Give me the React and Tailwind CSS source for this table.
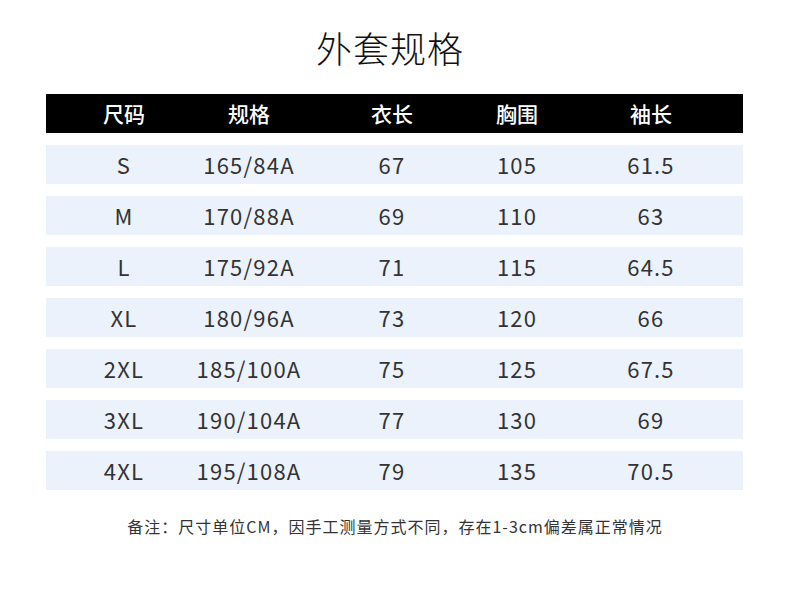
export default function App() {
  const rows = [
    ["S", "165/84A", "67", "105", "61.5"],
    ["M", "170/88A", "69", "110", "63"],
    ["L", "175/92A", "71", "115", "64.5"],
    ["XL", "180/96A", "73", "120", "66"],
    ["2XL", "185/100A", "75", "125", "67.5"],
    ["3XL", "190/104A", "77", "130", "69"],
    ["4XL", "195/108A", "79", "135", "70.5"],
  ];
  const heads = ["尺码", "规格", "衣长", "胸围", "袖长"];
  const grid = "grid grid-cols-[156px_94px_192px_58px_210px]";
  const font = { fontFamily: '"Noto Sans CJK SC", "Noto Sans", sans-serif' };
  return (
    <div className="w-[790px] h-[608px] bg-white overflow-hidden" style={font}>
      <div className="pt-[27px] pr-[10px] text-center text-[36px] leading-[40px] tracking-[1px] font-light text-[#111]">外套规格</div>
      <div className="mt-[27px] ml-[46px] w-[697px]">
        <div className={`${grid} h-[39px] bg-black text-white text-[21px] font-medium items-center`}>
          {heads.map((h) => (
            <div key={h} className="flex justify-center whitespace-nowrap">{h}</div>
          ))}
        </div>
        {rows.map((r) => (
          <div key={r[0]} className={`${grid} mt-[12px] h-[39px] bg-[#ebf2fb] text-[#333] text-[22px] items-center tracking-[1.2px]`}>
            {r.map((c, i) => (
              <div key={i} className="flex justify-center whitespace-nowrap">{c}</div>
            ))}
          </div>
        ))}
      </div>
      <div className="mt-[26px] text-center text-[16px] leading-[20px] tracking-[1px] text-[#333]">
        备注：尺寸单位CM，因手工测量方式不同，存在1-3cm偏差属正常情况
      </div>
    </div>
  );
}
